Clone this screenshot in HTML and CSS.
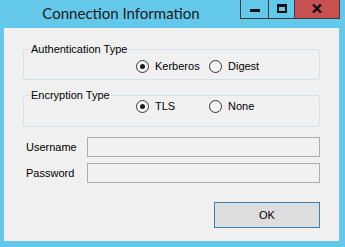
FILE: index.html
```html
<!DOCTYPE html>
<html>
<head>
<meta charset="utf-8">
<link rel="stylesheet" href="styles.css">
</head>
<body>
<div class="window">
  <div class="titlebar">
    <div class="title">Connection Information</div>
    <div class="caption-buttons">
      <div class="cbtn cbtn-min"><span class="glyph-min"></span></div>
      <div class="cbtn cbtn-max"><span class="glyph-max"></span></div>
      <div class="cbtn cbtn-close">
        <svg width="10" height="9" viewBox="0 0 10 9"><path d="M1 0.5 L9 8.5 M9 0.5 L1 8.5" stroke="#111" stroke-width="2.4" fill="none"/></svg>
      </div>
    </div>
  </div>
  <div class="client">
    <fieldset class="group group-auth">
      <legend>Authentication Type</legend>
      <div class="options">
        <label class="option"><span class="radio checked"></span>Kerberos</label>
        <label class="option"><span class="radio"></span>Digest</label>
      </div>
    </fieldset>
    <fieldset class="group group-enc">
      <legend>Encryption Type</legend>
      <div class="options">
        <label class="option"><span class="radio checked"></span>TLS</label>
        <label class="option"><span class="radio"></span>None</label>
      </div>
    </fieldset>
    <div class="field field-user">
      <span class="field-label">Username</span>
      <div class="textbox"></div>
    </div>
    <div class="field field-pass">
      <span class="field-label">Password</span>
      <div class="textbox"></div>
    </div>
    <div class="actions">
      <button class="ok-button">OK</button>
    </div>
  </div>
</div>
</body>
</html>
```

FILE: styles.css
```css
html, body {
  margin: 0;
  padding: 0;
}
body {
  width: 345px;
  height: 247px;
  overflow: hidden;
  background: #64c8ea;
}
.window {
  width: 345px;
  height: 247px;
  background: #64c8ea;
  font-family: "Liberation Sans", Arial, sans-serif;
  font-size: 11px;
  color: #000;
}
.titlebar {
  height: 28px;
  display: flex;
  align-items: flex-start;
}
.title {
  flex: 1;
  text-align: center;
  font-family: Lato, "Noto Sans", sans-serif;
  font-size: 15px;
  line-height: 20px;
  padding-top: 3px;
  padding-left: 2px;
  color: #1a1a1a;
}
.caption-buttons {
  display: flex;
  margin-right: 5px;
  border-left: 1px solid #3d3d3d;
}
.cbtn {
  height: 18px;
  border-right: 1px solid #3d3d3d;
  border-bottom: 1px solid #3d3d3d;
  display: flex;
  align-items: center;
  justify-content: center;
  box-sizing: content-box;
}
.cbtn-min { width: 27px; }
.cbtn-max { width: 25px; }
.cbtn-close {
  width: 44px;
  background: #c75050;
}
.glyph-min {
  width: 10px;
  height: 3px;
  background: #111;
  margin-top: 3px;
}
.glyph-max {
  width: 6px;
  height: 4px;
  border: 2px solid #111;
  border-top-width: 3px;
  margin-top: -1px;
}
.cbtn-close svg {
  display: block;
  margin-top: -1px;
}
.client {
  margin-left: 4px;
  width: 335px;
  height: 213px;
  box-sizing: border-box;
  background: #f0f0f0;
  padding: 15px 19px 0 19px;
  display: flex;
  flex-direction: column;
}
.group {
  margin: 0;
  padding: 4px 0 6px 0;
  border: 1px solid #d5dfe5;
  border-radius: 3px;
  min-width: 0;
}
.group legend {
  margin-left: 6px;
  padding: 0 1px 0 1px;
  line-height: 13px;
  font-size: 11px;
}
.group-enc {
  margin-top: 9px;
  padding: 0 0 13px 0;
}
.group-enc .options {
  margin-top: -2px;
}
.options {
  display: grid;
  grid-template-columns: 73px 73px;
  padding-left: 112px;
  height: 13px;
}
.option {
  display: flex;
  align-items: center;
  gap: 6px;
  line-height: 13px;
}
.radio {
  width: 11px;
  height: 11px;
  border: 1px solid #333;
  border-radius: 50%;
  background: #f6f6f6;
  position: relative;
  flex: none;
}
.radio.checked::after {
  content: "";
  position: absolute;
  left: 3px;
  top: 3px;
  width: 5px;
  height: 5px;
  border-radius: 50%;
  background: #1a1a1a;
}
.field {
  display: flex;
  align-items: center;
  height: 20px;
}
.field-user {
  margin-top: 10px;
}
.field-pass {
  margin-top: 6px;
}
.field-label {
  width: 61px;
  padding-left: 3px;
}
.textbox {
  width: 233px;
  height: 20px;
  box-sizing: border-box;
  border: 1px solid #adadad;
  background: #f0f0f0;
}
.actions {
  display: flex;
  justify-content: flex-end;
  margin-top: 19px;
}
.ok-button {
  width: 106px;
  height: 26px;
  margin: 0;
  padding: 0;
  border: 1px solid #3c7fb1;
  background: #dddddd;
  font-family: "Liberation Sans", Arial, sans-serif;
  font-size: 11px;
  color: #000;
}
```
